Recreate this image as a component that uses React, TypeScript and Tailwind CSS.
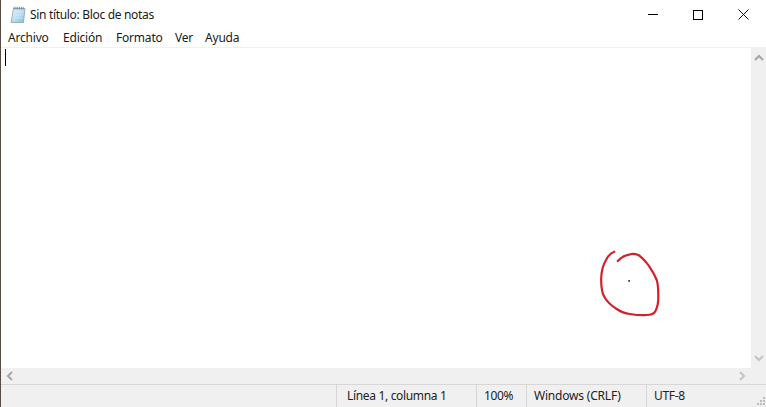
import React from "react";

const MENU = [
  { label: "Archivo", w: "w-[41px]" },
  { label: "Edición", w: "w-[39px]" },
  { label: "Formato", w: "w-[45px]" },
  { label: "Ver", w: "w-[16px]" },
  { label: "Ayuda", w: "w-[34px]" },
];

// little spiral notepad from the title bar
const NotepadIcon = () => (
  <svg width="16" height="18" viewBox="0 0 16 18" className="shrink-0">
    <defs>
      <linearGradient id="pad" x1="0" y1="0" x2="1" y2="1">
        <stop offset="0" stopColor="#e3f3fb" />
        <stop offset="0.55" stopColor="#b5dcee" />
        <stop offset="1" stopColor="#7fbddb" />
      </linearGradient>
    </defs>
    <path d="M3.5 2.5 H15 L13.5 16.5 H1 Z" fill="url(#pad)" stroke="#8aa3b1" strokeWidth="0.8" />
    <path d="M4 6 H13.6 M3.7 9 H13.3 M3.4 12 H13" stroke="#d9eef8" strokeWidth="0.7" />
    <path d="M4.2 0.8 V3.5 M6 0.8 V3.5 M7.8 0.8 V3.5 M9.6 0.8 V3.5 M11.4 0.8 V3.5 M13.2 0.8 V3.5" stroke="#6b7780" strokeWidth="0.8" />
  </svg>
);

const Chevron = ({ dir }: { dir: "up" | "down" | "left" | "right" }) => {
  const d = {
    up: "M1 6 L5 2 L9 6",
    down: "M1 2 L5 6 L9 2",
    left: "M6 1 L2 5 L6 9",
    right: "M2 1 L6 5 L2 9",
  }[dir];
  const stroke = dir === "left" || dir === "up" ? "#a6a6a6" : "#c4c4c4";
  const box = dir === "left" || dir === "right" ? "0 0 8 10" : "0 0 10 8";
  const w = dir === "left" || dir === "right" ? 8 : 10;
  const h = dir === "left" || dir === "right" ? 10 : 8;
  return (
    <svg width={w} height={h} viewBox={box}>
      <path d={d} fill="none" stroke={stroke} strokeWidth="2" />
    </svg>
  );
};

export default function App() {
  return (
    <div
      className="relative flex h-[407px] w-[766px] flex-col overflow-hidden border-l border-l-[#5a4a44] bg-white text-[12px] text-[#1a1a1a]"
      style={{ fontFamily: '"Noto Sans", "Open Sans", sans-serif' }}
    >
      {/* title bar */}
      <div className="flex h-[29px] shrink-0 items-center pl-[9px]">
        <NotepadIcon />
        <span className="ml-[4px] tracking-[-0.32px]">Sin título: Bloc de notas</span>
        <div className="ml-auto flex items-center">
          <div className="flex h-[29px] w-[45px] items-center justify-center">
            <div className="-mt-px h-px w-[10px] bg-black" />
          </div>
          <div className="flex h-[29px] w-[45px] items-center justify-center">
            <div className="h-[10px] w-[10px] border border-black" />
          </div>
          <div className="flex h-[29px] w-[46px] items-center justify-center">
            <svg width="11" height="11" viewBox="0 0 11 11">
              <path d="M0.5 0.5 L10.5 10.5 M10.5 0.5 L0.5 10.5" stroke="#111" strokeWidth="1" />
            </svg>
          </div>
        </div>
      </div>

      {/* menu */}
      <div className="flex h-[18px] shrink-0 items-center gap-[14px] pl-[7px] tracking-[-0.2px]">
        {MENU.map((m) => (
          <span key={m.label} className={`${m.w} whitespace-nowrap`}>
            {m.label}
          </span>
        ))}
      </div>
      <div className="h-px shrink-0 bg-[#f0f0f0]" />

      {/* editor + vertical scrollbar */}
      <div className="flex min-h-0 flex-1">
        <div className="flex-1 pl-[4px] pt-[1px]">
          <div className="h-[17px] w-px bg-black" />
        </div>
        <div className="flex w-[15px] shrink-0 flex-col items-center justify-between bg-[#f0f0f0] py-[6px]">
          <Chevron dir="up" />
          <Chevron dir="down" />
        </div>
      </div>

      {/* horizontal scrollbar */}
      <div className="flex h-[16px] shrink-0 items-center justify-between bg-[#f0f0f0] pl-[5px] pr-[20px]">
        <Chevron dir="left" />
        <Chevron dir="right" />
      </div>

      {/* status bar */}
      <div className="flex h-[23px] shrink-0 items-center border-t border-t-[#d7d7d7] bg-[#f0f0f0] text-[#222]">
        <div className="w-[335px]" />
        <div className="h-full w-[140px] border-l border-l-[#d7d7d7] pl-[10px] leading-[22px] tracking-[-0.33px]">Línea 1, columna 1</div>
        <div className="h-full w-[50px] border-l border-l-[#d7d7d7] pl-[7px] leading-[22px] tracking-[-0.4px]">100%</div>
        <div className="h-full w-[120px] border-l border-l-[#d7d7d7] pl-[7px] leading-[22px] tracking-[-0.2px]">Windows (CRLF)</div>
        <div className="h-full flex-1 border-l border-l-[#d7d7d7] pl-[7px] leading-[22px] tracking-[-0.3px]">UTF-8</div>
      </div>

      {/* red pen mark drawn over the window */}
      <svg className="absolute left-[-1px] top-0" width="766" height="407" viewBox="0 0 766 407" fill="none">
        <path
          d="M614.3 251.7 C610 253 608 256 606 260 C603 265 601.5 271 601.2 278 C601 287 602 294 605 298 C608 303 612 306 616.7 309 C621 312 625 313.5 630 314 C636 315 642 315.5 646.7 315 C651 315 654 314 655.5 311 C658 306 658.5 302 658.3 296 C658.3 289 658 284 656.7 280 C654 273 651 269 648.3 265 C645 261 642 257 638.3 255 C635 253.8 632 253.8 630 254.3 C626 255 623 256.5 621.7 257.7 C620 259 619 260 617.7 261"
          stroke="#d3202a"
          strokeWidth="2.2"
          strokeLinecap="round"
        />
        <rect x="628.2" y="280" width="1.8" height="1.8" fill="#444" />
        {/* status bar size grip */}
        <g fill="#bdbdbd">
          <rect x="763" y="397" width="2" height="2" />
          <rect x="760" y="400" width="2" height="2" />
          <rect x="763" y="400" width="2" height="2" />
          <rect x="757" y="403" width="2" height="2" />
          <rect x="760" y="403" width="2" height="2" />
          <rect x="763" y="403" width="2" height="2" />
        </g>
      </svg>
    </div>
  );
}
